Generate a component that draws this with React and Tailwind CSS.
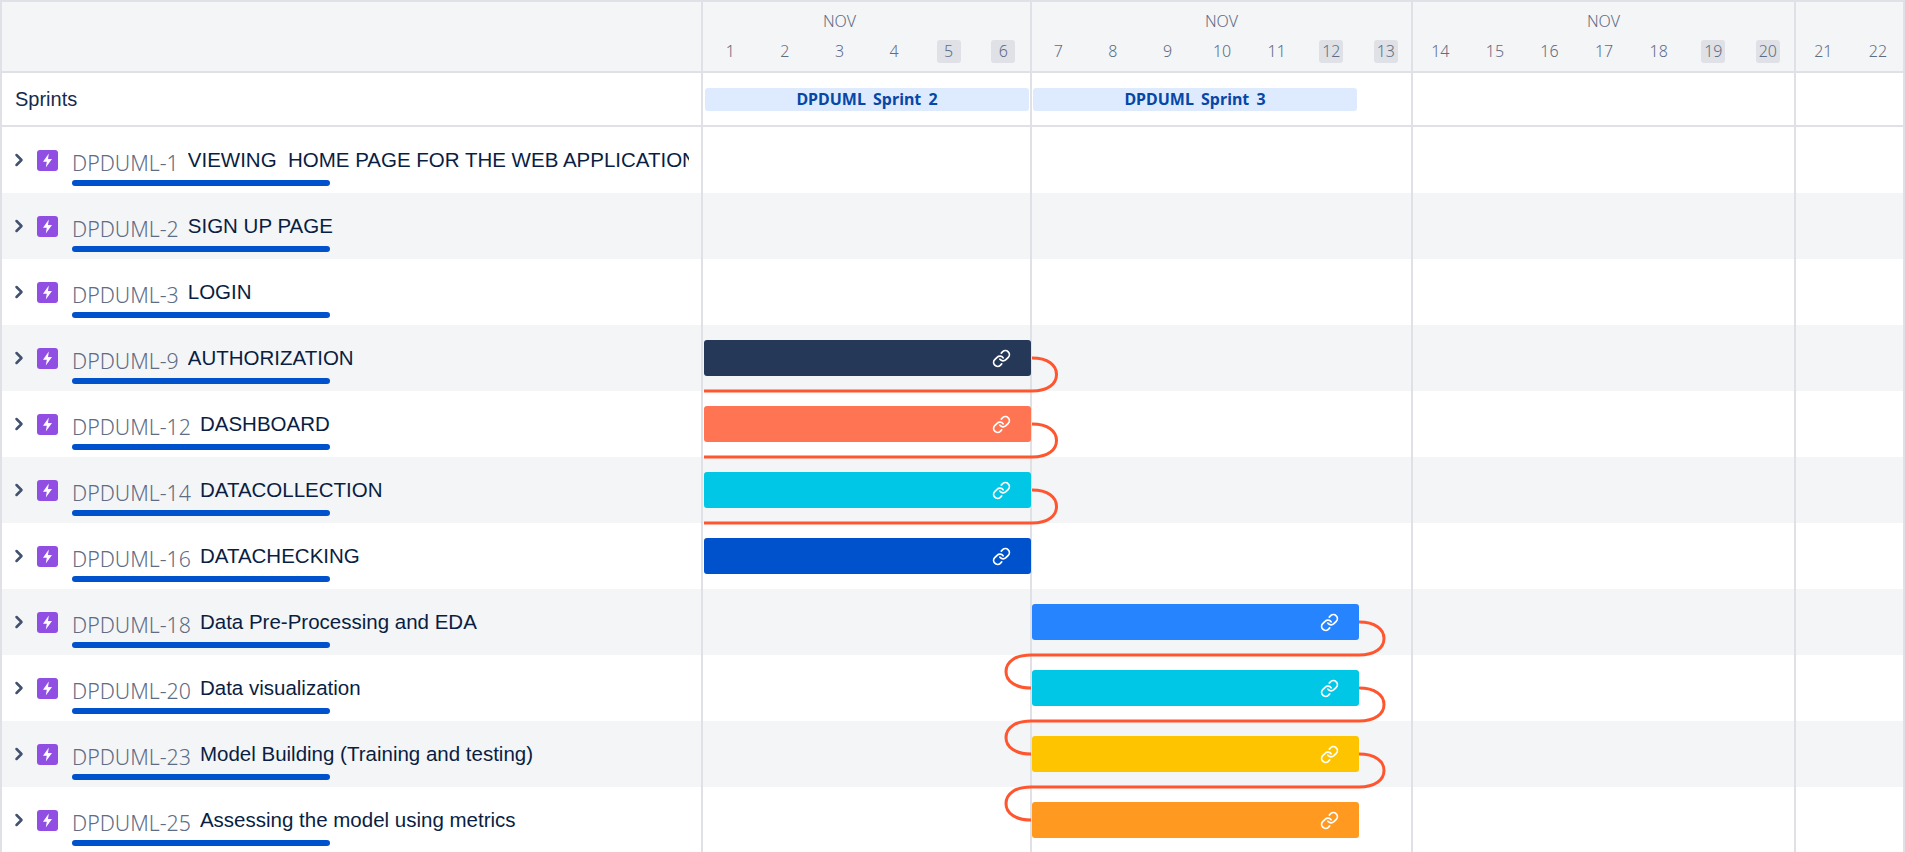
import { ChevronRight, Link } from "lucide-react";

const periods = [
  { label: "NOV", width: "w-[329px]", days: [1, 2, 3, 4, 5, 6], off: [5, 6], labelPad: "pr-[54px]", strip: "" },
  { label: "NOV", width: "w-[381px]", days: [7, 8, 9, 10, 11, 12, 13], off: [12, 13], labelPad: "", strip: "-ml-[1px]" },
  { label: "NOV", width: "w-[383px]", days: [14, 15, 16, 17, 18, 19, 20], off: [19, 20], labelPad: "", strip: "" },
  { label: "", width: "w-[109px]", days: [21, 22], off: [], labelPad: "", strip: "" },
];

const rows = [
  { id: "DPDUML-1", title: "VIEWING  HOME PAGE FOR THE WEB APPLICATION" },
  { id: "DPDUML-2", title: "SIGN UP PAGE" },
  { id: "DPDUML-3", title: "LOGIN" },
  { id: "DPDUML-9", title: "AUTHORIZATION", bar: "bg-[#253858]" },
  { id: "DPDUML-12", title: "DASHBOARD", bar: "bg-[#FF7452]" },
  { id: "DPDUML-14", title: "DATACOLLECTION", bar: "bg-[#00C7E6]" },
  { id: "DPDUML-16", title: "DATACHECKING", bar: "bg-[#0052CC]" },
  { id: "DPDUML-18", title: "Data Pre-Processing and EDA", bar: "bg-[#2684FF]", late: true },
  { id: "DPDUML-20", title: "Data visualization", bar: "bg-[#00C7E6]", late: true },
  { id: "DPDUML-23", title: "Model Building (Training and testing)", bar: "bg-[#FFC400]", late: true },
  { id: "DPDUML-25", title: "Assessing the model using metrics", bar: "bg-[#FF991F]", late: true },
];

const firstLinks = [358, 424, 490];
const secondLinks = [622, 688, 754];

function EpicIcon() {
  return (
    <svg width="21" height="21" viewBox="0 0 21 21" className="shrink-0">
      <rect width="21" height="21" rx="3" fill="#904EE2" />
      <path d="M11.8 3.5 L6 11.8 H9.8 L8.8 17.5 L15 9 H11 Z" fill="#fff" />
    </svg>
  );
}

function GridLines() {
  return (
    <div className="absolute inset-0 flex pointer-events-none">
      {periods.map((p, i) => (
        <div key={i} className={`${p.width} shrink-0 border-r-2 border-[#DFE1E6]`} />
      ))}
    </div>
  );
}

function TimelineHeader() {
  return (
    <div className="flex flex-1 overflow-hidden">
      {periods.map((p, i) => (
        <div key={i} className={`${p.width} shrink-0 border-r-2 border-[#DFE1E6] flex flex-col`}>
          <div className={`h-[29px] pt-[6px] text-center text-[16px] leading-[26px] font-light text-[#5E6C84] ${p.labelPad}`}>
            {p.label}
          </div>
          <div className={`flex mt-[9px] ${p.strip}`}>
            {p.days.map((d) => (
              <div key={d} className="w-[54.6px] shrink-0 flex justify-center">
                <span
                  className={`w-[24px] h-[23px] rounded-[3px] text-[16px] leading-[23px] font-light text-[#5E6C84] whitespace-nowrap flex justify-center ${
                    p.off.includes(d) ? "bg-[#DFE1E6]" : ""
                  }`}
                >
                  {d}
                </span>
              </div>
            ))}
          </div>
        </div>
      ))}
    </div>
  );
}

function Row({ row, index }) {
  return (
    <div className={`flex h-[66px] ${index % 2 === 1 ? "bg-[#F4F5F7]" : "bg-white"}`}>
      <div className="w-[703px] shrink-0 border-r-2 border-[#DFE1E6] pl-[9px] pr-[12px] flex">
        <ChevronRight size={20} strokeWidth={3} className="shrink-0 mt-[23px] text-[#42526E]" />
        <div className="mt-[23px] ml-[8px]">
          <EpicIcon />
        </div>
        <div className="ml-[14px] flex-1 min-w-0">
          <div className="flex items-start h-[53px]">
            <span className="font-['Noto_Sans'] font-light text-[21.3px] leading-[28px] mt-[22px] text-[#5E6C84] shrink-0">
              {row.id}
            </span>
            <span className="font-['Liberation_Sans'] text-[20.5px] leading-[26px] mt-[20px] ml-[9px] text-[#091E42] whitespace-pre overflow-hidden">
              {row.title}
            </span>
          </div>
          <div className="w-[258px] h-[6px] rounded-full bg-[#0052CC]" />
        </div>
      </div>
      <div className="flex-1 relative">
        <GridLines />
        {row.bar && (
          <div
            className={`relative mt-[15px] h-[36px] w-[327px] rounded-[3px] flex items-center justify-end pr-[20px] ${row.bar} ${
              row.late ? "ml-[329px]" : "ml-[1px]"
            }`}
          >
            <Link size={19} strokeWidth={2.2} className="text-white" />
          </div>
        )}
      </div>
    </div>
  );
}

export default function App() {
  return (
    <div className="relative w-full h-[852px] overflow-hidden bg-white font-['Noto_Sans',sans-serif] border-l-2 border-t-2 border-[#DFE1E6] box-border">
      <div className="flex h-[71px] bg-[#F4F5F7] border-b-2 border-[#DFE1E6] -ml-[2px] pl-[2px]">
        <div className="w-[701px] shrink-0 border-r-2 border-[#DFE1E6]" />
        <TimelineHeader />
      </div>
      <div className="flex h-[54px] border-b-2 border-[#DFE1E6] -ml-[2px] pl-[2px]">
        <div className="w-[701px] shrink-0 border-r-2 border-[#DFE1E6] pl-[13px] flex items-center font-['Liberation_Sans'] text-[20px] text-[#172B4D]">
          Sprints
        </div>
        <div className="flex-1 relative flex items-center">
          <GridLines />
          <div className="relative ml-[2px] w-[324px] h-[23px] rounded-[3px] bg-[#DEEBFF] text-[#0747A6] text-[16px] font-bold flex items-center justify-center [word-spacing:3px]">
            DPDUML Sprint 2
          </div>
          <div className="relative ml-[4px] w-[324px] h-[23px] rounded-[3px] bg-[#DEEBFF] text-[#0747A6] text-[16px] font-bold flex items-center justify-center [word-spacing:3px]">
            DPDUML Sprint 3
          </div>
        </div>
      </div>
      <div className="-ml-[2px]">
        {rows.map((row, i) => (
          <Row key={row.id} row={row} index={i} />
        ))}
      </div>
      <svg className="absolute -left-[2px] -top-[2px] pointer-events-none" width="1905" height="852" fill="none">
        {firstLinks.map((y) => (
          <path
            key={y}
            d={`M1032 ${y} C1048 ${y} 1056.5 ${y + 7} 1056.5 ${y + 16.5} C1056.5 ${y + 26} 1048 ${y + 33} 1032 ${y + 33} L704 ${y + 33}`}
            stroke="#FF5630"
            strokeWidth="3"
          />
        ))}
        {secondLinks.map((y) => (
          <path
            key={y}
            d={`M1359 ${y} C1375 ${y} 1384 ${y + 7} 1384 ${y + 16.5} C1384 ${y + 26} 1375 ${y + 33} 1359 ${y + 33} L1031 ${y + 33} C1015 ${y + 33} 1006 ${y + 40} 1006 ${y + 49.5} C1006 ${y + 59} 1015 ${y + 66} 1031 ${y + 66}`}
            stroke="#FF5630"
            strokeWidth="3"
          />
        ))}
      </svg>
    </div>
  );
}
